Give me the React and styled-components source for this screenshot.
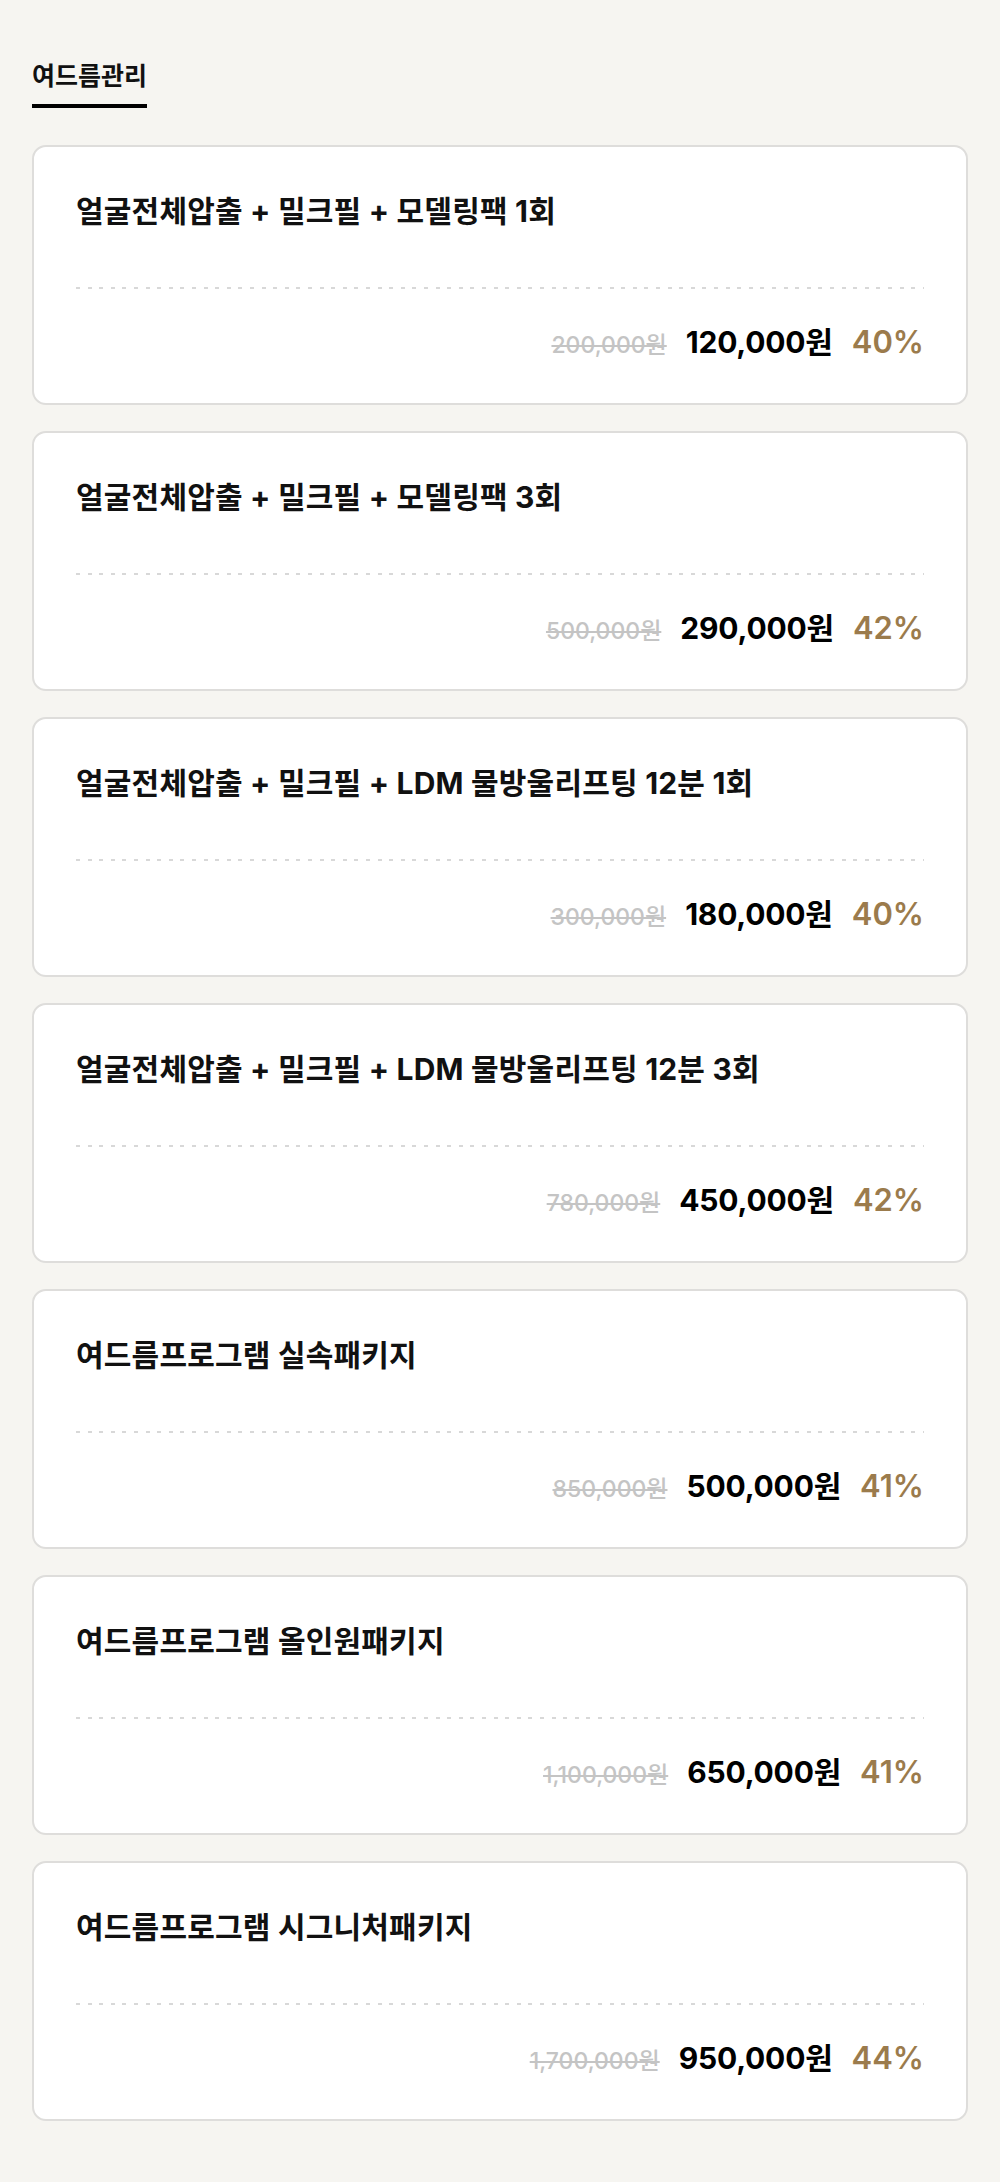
import styled, { createGlobalStyle } from 'styled-components';

const items = [
  { title: '얼굴전체압출 + 밀크필 + 모델링팩 1회', original: '200,000원', price: '120,000원', rate: '40%' },
  { title: '얼굴전체압출 + 밀크필 + 모델링팩 3회', original: '500,000원', price: '290,000원', rate: '42%' },
  { title: '얼굴전체압출 + 밀크필 + LDM 물방울리프팅 12분 1회', original: '300,000원', price: '180,000원', rate: '40%' },
  { title: '얼굴전체압출 + 밀크필 + LDM 물방울리프팅 12분 3회', original: '780,000원', price: '450,000원', rate: '42%' },
  { title: '여드름프로그램 실속패키지', original: '850,000원', price: '500,000원', rate: '41%' },
  { title: '여드름프로그램 올인원패키지', original: '1,100,000원', price: '650,000원', rate: '41%' },
  { title: '여드름프로그램 시그니처패키지', original: '1,700,000원', price: '950,000원', rate: '44%' },
];

const GlobalStyle = createGlobalStyle`
  body {
    margin: 0;
    background: #f6f5f1;
    font-family: "Inter", "Noto Sans CJK KR", sans-serif;
    color: #111;
  }
`;

const Page = styled.div`
  padding: 59px 32px 61px;
  min-height: 2182px;
  box-sizing: border-box;
`;

const Tabs = styled.div`
  display: flex;
  margin-bottom: 37px;
`;

const Tab = styled.div`
  font-size: 25px;
  line-height: 34px;
  font-weight: 700;
  padding: 0 0 11px;
  border-bottom: 4px solid #000;
`;

const List = styled.div`
  display: flex;
  flex-direction: column;
  gap: 26px;
`;

const Card = styled.div`
  background: #fff;
  border: 2px solid #dedddb;
  border-radius: 14px;
  padding: 44px 42px 38px;
  height: 260px;
  box-sizing: border-box;
`;

const Title = styled.div`
  font-size: 30px;
  line-height: 40px;
  font-weight: 700;
  letter-spacing: 0.2px;
`;

const Divider = styled.div`
  height: 2px;
  margin: 56px 0 33px;
  background: repeating-linear-gradient(90deg, #d8d8d8 0 4px, transparent 4px 11.6px);
`;

const PriceRow = styled.div`
  display: flex;
  justify-content: flex-end;
  align-items: baseline;
  gap: 19px;
  height: 40px;
  line-height: 40px;
`;

const Original = styled.span`
  font-size: 23px;
  font-weight: 500;
  color: #c4c4c4;
  text-decoration: line-through;
  text-decoration-thickness: 2px;
`;

const Price = styled.span`
  font-size: 30px;
  font-weight: 700;
  color: #000;
  letter-spacing: -0.2px;
`;

const Rate = styled.span`
  font-size: 31px;
  font-weight: 600;
  color: #9b7b4c;
`;

const App = () => (
  <>
    <GlobalStyle />
    <Page>
      <Tabs>
        <Tab>여드름관리</Tab>
      </Tabs>
      <List>
        {items.map((item) => (
          <Card key={item.title}>
            <Title>{item.title}</Title>
            <Divider />
            <PriceRow>
              <Original>{item.original}</Original>
              <Price>{item.price}</Price>
              <Rate>{item.rate}</Rate>
            </PriceRow>
          </Card>
        ))}
      </List>
    </Page>
  </>
);

export default App;
